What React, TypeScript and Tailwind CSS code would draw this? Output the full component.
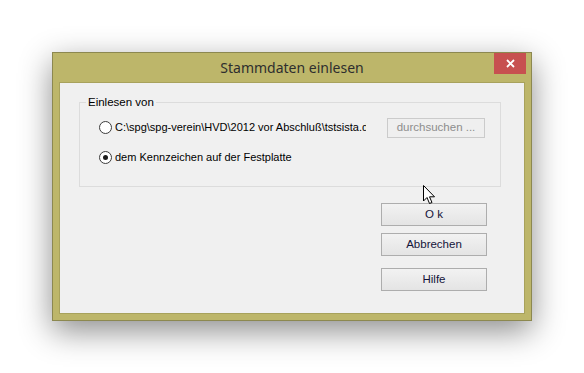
import React from 'react';

const sans = { fontFamily: '"Liberation Sans", Arial, sans-serif' };

const Radio = ({ checked }: { checked?: boolean }) => (
  <span className="flex h-[13px] w-[13px] shrink-0 items-center justify-center rounded-full border border-[#3c3c3c] bg-white">
    {checked && <span className="h-[5px] w-[5px] rounded-full bg-[#1b1b1b]" />}
  </span>
);

const Button = ({ label, mt }: { label: string; mt: string }) => (
  <button
    className={`${mt} flex h-[23px] w-[106px] items-center justify-center border border-[#adadad] bg-gradient-to-b from-[#f2f2f2] to-[#e4e4e4] text-[11.5px] text-[#14143a]`}
  >
    {label}
  </button>
);

const Cursor = () => (
  <svg className="absolute left-[423px] top-[185px]" width="13" height="20" viewBox="0 0 13 20">
    <path d="M0.5 0.5 L0.5 16 L4 12.5 L6.5 18.5 L9 17.5 L6.5 11.8 L11.5 11.8 Z" fill="#fff" stroke="#000" strokeWidth="1" />
  </svg>
);

export default function App() {
  return (
    <div className="relative h-[373px] w-[584px] overflow-hidden bg-white pl-[52px] pt-[52px]" style={sans}>
      <div className="flex h-[269px] w-[480px] flex-col border border-[#8c8850] bg-[#bdb66a] px-[6px] pb-[6px] shadow-[0_10px_30px_rgba(0,0,0,0.45)]">
        <div className="relative flex h-[29px] shrink-0 items-center justify-center">
          <span className="text-[14px] text-[#2e2e2e]" style={{ fontFamily: '"Noto Sans", "Open Sans", sans-serif' }}>
            Stammdaten einlesen
          </span>
          <div className="absolute right-[-1px] top-0 flex h-[21px] w-[32px] items-center justify-center bg-[#c75050]">
            <svg width="9" height="9" viewBox="0 0 9 9">
              <path d="M1 1 L8 8 M8 1 L1 8" stroke="#fff" strokeWidth="1.8" />
            </svg>
          </div>
        </div>
        <div className="flex flex-1 flex-col border border-[#a8a25c] bg-[#f0f0f0] pl-[19px] pt-[19px]">
          <div className="relative flex h-[85px] w-[422px] flex-col border border-[#dcdcdc] pl-[19px] pt-[18px]">
            <span className="absolute left-[6px] top-[-8px] bg-[#f0f0f0] px-[2px] text-[11.5px] leading-[14px] text-black">
              Einlesen von
            </span>
            <div className="flex h-[13px] items-center">
              <Radio />
              <span className="ml-[3px] w-[251px] overflow-hidden whitespace-nowrap text-[11px] text-black">
                C:\spg\spg-verein\HVD\2012 vor Abschluß\tstsista.dat
              </span>
              <div className="ml-[21px] flex h-[20px] w-[98px] items-center justify-center border border-[#cbcbcb] bg-[#efefef] text-[11.5px] text-[#8d8d8d]">
                durchsuchen ...
              </div>
            </div>
            <div className="mt-[17px] flex h-[13px] items-center">
              <Radio checked />
              <span className="ml-[3px] text-[11px] text-black">dem Kennzeichen auf der Festplatte</span>
            </div>
          </div>
          <div className="ml-[302px] flex flex-col">
            <Button label="O k" mt="mt-[16px]" />
            <Button label="Abbrechen" mt="mt-[7px]" />
            <Button label="Hilfe" mt="mt-[12px]" />
          </div>
        </div>
      </div>
      <Cursor />
    </div>
  );
}
